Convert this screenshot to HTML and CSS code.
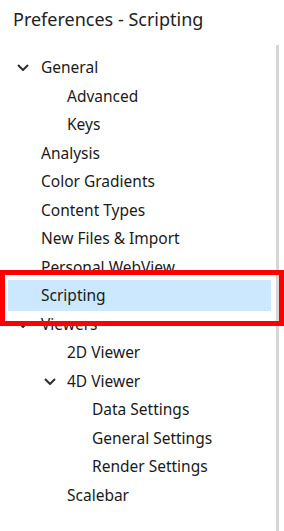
FILE: index.html
```html
<!DOCTYPE html>
<html>
<head>
<meta charset="utf-8">
<link rel="stylesheet" href="styles.css">
</head>
<body>
<div class="title">Preferences - Scripting</div>
<div class="tree">
  <div class="row l0"><svg class="chev" viewBox="0 0 12 7"><path d="M1 1 L6 6 L11 1" /></svg>General</div>
  <div class="row l1">Advanced</div>
  <div class="row l1">Keys</div>
  <div class="row l0">Analysis</div>
  <div class="row l0">Color Gradients</div>
  <div class="row l0">Content Types</div>
  <div class="row l0">New Files &amp; Import</div>
  <div class="row l0">Personal WebView</div>
  <div class="row l0 sel">Scripting</div>
  <div class="row l0"><svg class="chev" viewBox="0 0 12 7"><path d="M1 1 L6 6 L11 1" /></svg>Viewers</div>
  <div class="row l1">2D Viewer</div>
  <div class="row l1"><svg class="chev" viewBox="0 0 12 7"><path d="M1 1 L6 6 L11 1" /></svg>4D Viewer</div>
  <div class="row l2">Data Settings</div>
  <div class="row l2">General Settings</div>
  <div class="row l2">Render Settings</div>
  <div class="row l1">Scalebar</div>
</div>
<div class="callout"></div>
</body>
</html>
```
FILE: styles.css
```css
html, body {
  margin: 0;
  padding: 0;
  background: #ffffff;
  width: 284px;
  height: 531px;
  overflow: hidden;
}
body {
  font-family: "Noto Sans", "Open Sans", sans-serif;
  color: #1a1a1a;
  position: relative;
}
.title {
  height: 45px;
  box-sizing: border-box;
  padding: 7px 0 0 13px;
  font-size: 18px;
  line-height: 25px;
  color: #222;
}
.tree {
  width: 279px;
  height: 486px;
  box-sizing: border-box;
  border-right: 3px solid #d6d6d6;
  padding-top: 8px;
}
.row {
  position: relative;
  height: 28.5px;
  line-height: 28.5px;
  margin-left: 8px;
  width: 263px;
  font-size: 15.5px;
  white-space: nowrap;
}
.l0 { padding-left: 33px; box-sizing: border-box; }
.l1 { padding-left: 59px; box-sizing: border-box; }
.l2 { padding-left: 84px; box-sizing: border-box; }
.sel {
  background: #cce8ff;
  box-shadow: 0 1px 0 #cce8ff, 0 -1px 0 #cce8ff;
}
.chev {
  position: absolute;
  top: 11px;
  width: 12px;
  height: 7px;
  fill: none;
  stroke: #2e2e2e;
  stroke-width: 2;
}
.l0 .chev { left: 9px; }
.l1 .chev { left: 36px; }
.callout {
  position: absolute;
  left: 0;
  top: 270px;
  width: 284px;
  height: 56px;
  box-sizing: border-box;
  border: 5px solid #ff0000;
}
```
